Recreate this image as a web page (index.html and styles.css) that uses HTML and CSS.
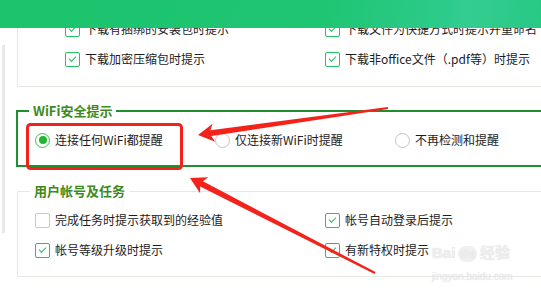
FILE: index.html
```html
<!DOCTYPE html>
<html>
  <head>
    <title>安全提示设置</title>
    <meta name="viewport" content="width=device-width, initial-scale=1" />
    <link rel="stylesheet" href="styles.css">
  </head>

  <body>
    <div class="topbar"></div>

    <div class="page">
      <div class="section section-download">
        <div class="grid grid-download">
          <label class="opt"><span class="box checked"></span>下载有捆绑的安装包时提示</label>
          <label class="opt"><span class="box checked"></span>下载文件为快捷方式时提示并重命名</label>
          <label class="opt"><span class="box checked"></span>下载加密压缩包时提示</label>
          <label class="opt"><span class="box checked"></span>下载非office文件（.pdf等）时提示</label>
        </div>
      </div>

      <fieldset class="group group-wifi">
        <legend>WiFi安全提示</legend>
        <div class="radios">
          <label class="opt"><span class="radio on"></span>连接任何WiFi都提醒</label>
          <label class="opt"><span class="radio"></span>仅连接新WiFi时提醒</label>
          <label class="opt"><span class="radio"></span>不再检测和提醒</label>
        </div>
      </fieldset>

      <fieldset class="group group-account">
        <legend>用户帐号及任务</legend>
        <div class="grid grid-account">
          <label class="opt"><span class="box"></span>完成任务时提示获取到的经验值</label>
          <label class="opt"><span class="box checked"></span>帐号自动登录后提示</label>
          <label class="opt"><span class="box checked"></span>帐号等级升级时提示</label>
          <label class="opt"><span class="box checked"></span>有新特权时提示</label>
        </div>
      </fieldset>
    </div>

    <div class="frame-line"></div>

    <div class="watermark">
      <div class="wm-logo">Bai<span class="paw">du</span>经验</div>
      <div class="wm-url">jingyan.baidu.com</div>
    </div>

    <svg class="marks" width="541" height="293" viewBox="0 0 541 293">
      <rect x="27.5" y="124.5" width="154" height="44" rx="3" fill="none" stroke="#f3231c" stroke-width="3" />
      <polygon fill="#f3231c" points="198,135 212.6,123.8 210.4,130.2 387.9,107 388.1,109 211.3,136.1 215.1,141.7" />
      <polygon fill="#f3231c" points="190,178 208.3,177.3 202.9,181.3 375.5,272.1 374.5,273.9 200.2,186.6 200.1,193.3" />
    </svg>
  </body>
</html>
```

FILE: styles.css
```css
    *,
    *:before,
    *:after {
      box-sizing: border-box;
    }

    body {
      margin: 0;
      width: 541px;
      height: 293px;
      overflow: hidden;
      position: relative;
      background: #fff;
      color: #1c1c1c;
      font-family: "Noto Sans CJK SC", "Noto Sans", sans-serif;
      font-size: 12px;
    }

    .topbar {
      position: relative;
      z-index: 2;
      height: 28px;
      background: linear-gradient(100deg, #1cc46d 0%, #1fc573 60%, #2ccb8a 82%, #34cd91 86%, #27c884 100%);
    }

    .page {
      margin-top: -14px;
      padding-left: 17px;
    }

    .section-download {
      width: 600px;
      border: 1px solid #e8e8e2;
      border-top: none;
      padding: 0 0 12px 47px;
    }

    .grid {
      display: grid;
      grid-auto-rows: 30px;
    }

    .grid-download {
      grid-template-columns: 260px auto;
    }

    .opt {
      display: flex;
      align-items: center;
      gap: 5px;
      white-space: nowrap;
      line-height: 16px;
    }

    .box {
      position: relative;
      flex: none;
      width: 15px;
      height: 15px;
      border: 1px solid #c9c9c9;
      border-radius: 2px;
      background: #fff;
    }

    .box.checked {
      border-color: #26c065;
    }

    .box.checked:after {
      content: "";
      position: absolute;
      left: 3px;
      top: 3px;
      width: 7px;
      height: 4px;
      border-left: 1.5px solid #26c065;
      border-bottom: 1.5px solid #26c065;
      transform: rotate(-45deg);
    }

    .group {
      width: 600px;
      margin: 16px 0 0;
      padding: 0 0 10px 11px;
      min-width: 0;
    }

    .group legend {
      padding: 0 4px;
      font-size: 13px;
      font-weight: bold;
      line-height: 16px;
      color: #3d8a1e;
    }

    .group-wifi {
      margin-left: -1px;
      border: 2px solid #1f9030;
    }

    .radios {
      display: grid;
      grid-template-columns: 180px 180px auto;
      grid-auto-rows: 30px;
      margin-top: 6px;
      padding-left: 6px;
    }

    .radio {
      position: relative;
      flex: none;
      width: 15px;
      height: 15px;
      border: 1px solid #c4c4c4;
      border-radius: 50%;
      background: #fff;
    }

    .radio.on {
      border-color: #3cc04e;
    }

    .radio.on:after {
      content: "";
      position: absolute;
      left: 2.5px;
      top: 2.5px;
      width: 8px;
      height: 8px;
      border-radius: 50%;
      background: #22b530;
    }

    .group-account {
      border: 1px solid #e8e8e2;
      padding: 0 0 11px 12px;
    }

    .grid-account {
      grid-template-columns: 290px auto;
      margin-top: 6px;
      padding-left: 5px;
    }

    .frame-line {
      position: absolute;
      left: 2px;
      top: 45px;
      width: 3px;
      height: 188px;
      background: #e8e8e8;
    }

    .watermark {
      position: absolute;
      left: 432px;
      top: 243px;
      color: #eeeeee;
      font-family: "Liberation Sans", "Noto Sans CJK SC", sans-serif;
      font-weight: bold;
      text-shadow: 0 0 1px #d8d8d8;
      pointer-events: none;
    }

    .wm-logo {
      font-size: 15px;
      line-height: 20px;
    }

    .wm-logo .paw {
      display: inline-block;
      margin: 0 3px;
      padding: 0 2px;
      border-radius: 8px;
      background: #f0f0f0;
      font-size: 12px;
      line-height: 16px;
    }

    .wm-url {
      font-size: 10px;
      line-height: 13px;
      margin-top: 7px;
      font-weight: normal;
    }

    .marks {
      position: absolute;
      left: 0;
      top: 0;
      pointer-events: none;
    }
```
